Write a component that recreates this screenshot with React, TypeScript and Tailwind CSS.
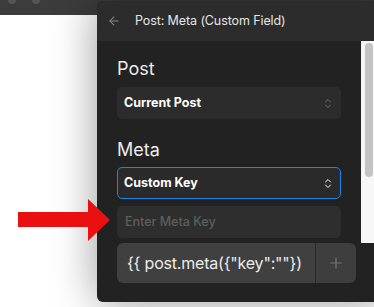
import { ArrowLeft, ChevronsUpDown, Plus } from "lucide-react";

export default function App() {
  return (
    <div
      className="relative w-[374px] h-[307px] overflow-hidden bg-white"
      style={{ fontFamily: "Inter, 'Noto Sans', sans-serif" }}
    >
      {/* page toolbar behind the panel */}
      <div className="h-[15px] bg-[#3c3c3c] flex items-start gap-4 pl-2">
        <span className="w-[8px] h-[4px] rounded-b-full bg-[#555]" />
        <span className="w-[8px] h-[4px] rounded-b-full bg-[#555]" />
      </div>

      {/* panel */}
      <div className="absolute left-[97px] top-[1px] w-[290px] h-[301px] rounded-[6px] bg-[#222] overflow-hidden shadow-[0_0_45px_rgba(0,0,0,0.4)] flex flex-col">
        <div className="h-[40px] shrink-0 bg-[#2c2c2c] flex items-center pl-[10px] gap-[14px]">
          <ArrowLeft className="w-[14px] h-[14px] text-[#8a8a8a]" strokeWidth={1.75} />
          <span className="text-[12.5px] text-[#e6e6e6] tracking-[-0.1px]">Post: Meta (Custom Field)</span>
        </div>

        <div className="flex h-[202px] shrink-0">
          <div className="w-[264px] pl-[20px] pr-[20px] pt-[17px]">
            <div className="text-[18px] leading-[22px] text-[#ececec]">Post</div>
            <div className="mt-[7px] h-[32px] rounded-[5px] bg-[#2c2c2c] flex items-center justify-between pl-[7px] pr-[7px]">
              <span className="text-[12.5px] font-bold text-white">Current Post</span>
              <ChevronsUpDown className="w-[12px] h-[13px] text-[#707070]" strokeWidth={2} />
            </div>

            <div className="mt-[20px] text-[18px] leading-[22px] text-[#ececec]">Meta</div>
            <div className="mt-[6px] h-[32px] rounded-[5px] bg-[#2a2a2a] border border-[#1a86e8] flex items-center justify-between pl-[6px] pr-[6px]">
              <span className="text-[12.5px] font-bold text-white">Custom Key</span>
              <ChevronsUpDown className="w-[12px] h-[13px] text-white" strokeWidth={2} />
            </div>
            <div className="mt-[7px] h-[32px] rounded-[5px] bg-[#2e2e2e] flex items-center pl-[8px]">
              <span className="text-[12.5px] font-medium text-[#5e5e5e]">Enter Meta Key</span>
            </div>
          </div>
          <div className="w-[13px] bg-[#f7f7f7] pt-[2px] pl-[4px]">
            <div className="w-[8px] h-[134px] rounded-full bg-[#c4c4c4]" />
          </div>
        </div>

        <div className="pl-[20px] flex">
          <div className="w-[239px] h-[40px] rounded-[6px] overflow-hidden flex">
            <div className="w-[198px] bg-[#404040] flex items-center pl-[10px]">
              <span className="text-[16px] text-[#ececec] tracking-[-0.2px] whitespace-nowrap">
                {'{{ post.meta({"key":""})'}
              </span>
            </div>
            <div className="w-[1px] bg-[#2a2a2a]" />
            <div className="flex-1 bg-[#3e3e3e] flex items-center justify-center">
              <Plus className="w-[18px] h-[18px] text-[#777]" strokeWidth={1.5} />
            </div>
          </div>
        </div>
      </div>

      {/* annotation arrow */}
      <svg className="absolute left-[18px] top-[199px]" width="93" height="43" viewBox="0 0 93 43">
        <polygon points="0,13 70,13 70,0 92,21 70,42 70,28 0,28" fill="#ea1010" />
      </svg>
    </div>
  );
}
